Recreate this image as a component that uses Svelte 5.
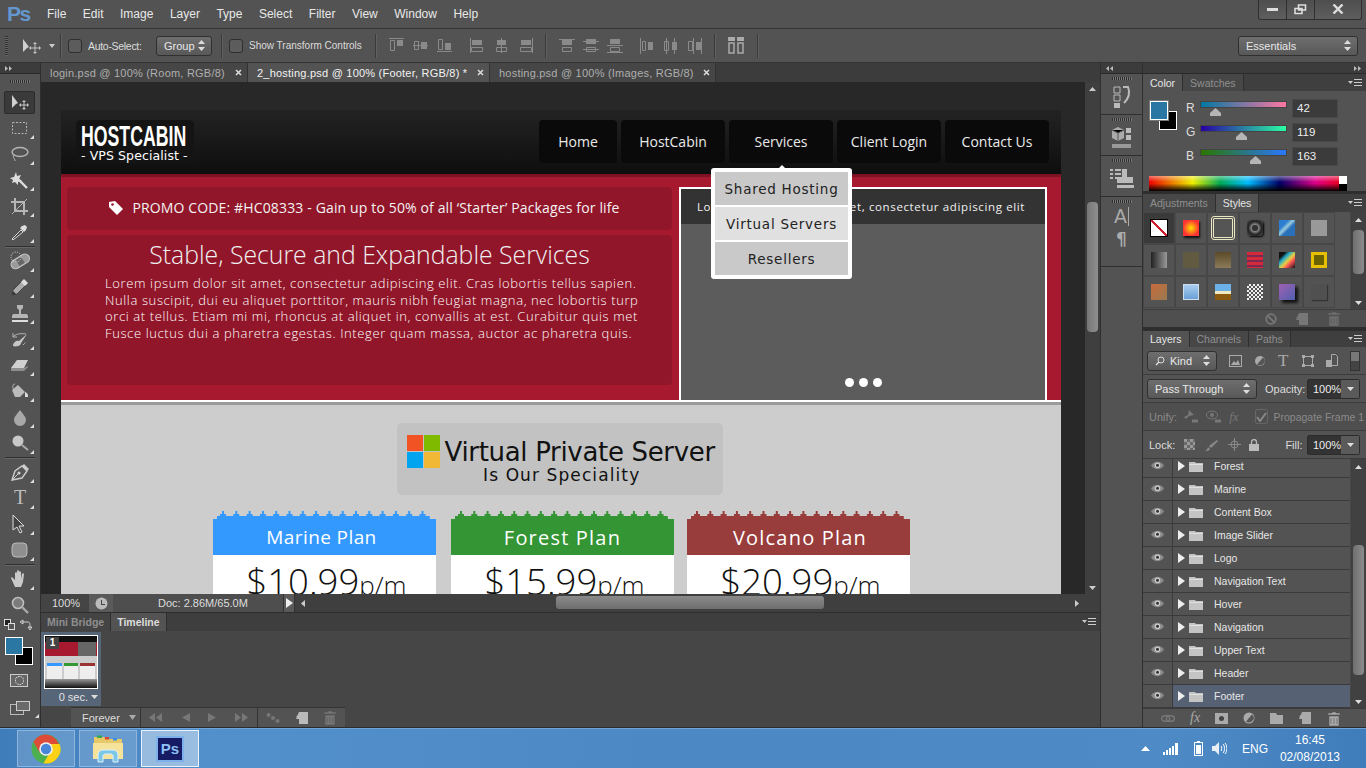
<script>
  const menus = ['File', 'Edit', 'Image', 'Layer', 'Type', 'Select', 'Filter', 'View', 'Window', 'Help'];
  const docTabs = [
    { name: 'login.psd @ 100% (Room, RGB/8)', w: 207 },
    { name: '2_hosting.psd @ 100% (Footer, RGB/8) *', w: 242, on: true },
    { name: 'hosting.psd @ 100% (Images, RGB/8)', w: 226 }
  ];
  const s = 'fill="none" stroke="#b5b5b5"';
  const f = 'fill="#b5b5b5"';

  const toolGroups = [
    [
      { p: `<path d="M3 2v13l4-4 2-1z" fill="#d0d0d0"/><path d="M15 8v8M11 12h8" stroke="#c4c4c4"/><path d="M15 7l-2 2h4zM15 17l-2-2h4zM10 12l2-2v4zM20 12l-2-2v4z" fill="#c4c4c4"/>`, on: true, nc: true },
      { p: `<rect x="3.5" y="4.5" width="14" height="11" ${s} stroke-dasharray="2 1.5"/>` },
      { p: `<ellipse cx="11" cy="8" rx="8" ry="4.5" ${s} stroke-width="1.4"/><path d="M5 11c-2 3 1 3 1 6" ${s}/>` },
      { p: `<path d="M9 9l9 9" stroke="#ddd" stroke-width="2.4"/><path d="M7 2l1 4 4-1-2 4 3 2-4 1 0 3-3-3-3 1 1-3-3-2 4-1z" fill="#ddd"/>` },
      { p: `<path d="M6 2v13h13M2 6h13v13" ${s} stroke-width="2"/><path d="M3 18L18 3" stroke="#b5b5b5"/>` },
      { p: `<path d="M4 18l-1-1 9-9 2 2z" fill="#444" stroke="#ddd"/><path d="M11 6l4 4 2-2 1-3-2-2-3 1z" fill="#ddd"/>` }
    ],
    [
      { p: `<g transform="rotate(-32 11 10)"><rect x="1" y="6" width="20" height="9" rx="4.5" fill="#9a9a9a" stroke="#ccc"/><rect x="8" y="7" width="6" height="7" fill="#666"/></g><circle cx="7" cy="6" r="5" fill="none" stroke="#ddd" stroke-dasharray="1 1.4"/>` },
      { p: `<path d="M3 18l1-5L13 4l4 4-9 9z" fill="#aaa" stroke="#444"/><path d="M12 5l3-3 4 4-3 3z" fill="#ddd"/><path d="M3 18l1-4 3 3z" fill="#333"/>` },
      { p: `<path d="M8 2h6v3l-2 2v4h6l1 2v2H3v-2l1-2h6V7L8 5z" ${f}/><path d="M3 18h16" stroke="#ddd" stroke-width="2"/>` },
      { p: `<path d="M4 17c0-4 4-6 6-5l8-7-6 9c0 3-5 4-8 3z" fill="#c6c6c6"/><path d="M4 8c2-3 8-4 13-3" ${s}/><path d="M4 8V4M4 8h4" ${s}/><path d="M14 16l3-3" stroke="#ddd" stroke-dasharray="1 1"/>` },
      { p: `<path d="M2 13L8 5h11l-4 8z" fill="#d0d0d0"/><path d="M2 13v3h13l4-4v-1l-4 2z" fill="#8e8e8e"/>` },
      { p: `<path d="M3 9l6-5 7 7-5 5H6z" fill="#bbb"/><path d="M6 3c-3 0-3 5 0 6" ${s}/><path d="M16 11c3 1 3 3 3 5h-3z" fill="#ddd"/>` },
      { p: `<path d="M11 3c3 4 6 7 6 10a6 6 0 01-12 0c0-3 3-6 6-10z" fill="#a8a8a8"/>` },
      { p: `<circle cx="9" cy="8" r="5.5" fill="#c8c8c8"/><path d="M13 12l6 5" stroke="#aaa" stroke-width="2"/>` }
    ],
    [
      { p: `<path d="M3 18l3-9 7-5 5 5-5 7z" fill="#555" stroke="#ccc" stroke-width="1.4"/><path d="M3 18l6-6" stroke="#ccc"/><circle cx="10" cy="11" r="1.6" fill="#ccc"/><path d="M13 4l2-2 5 5-2 2z" fill="#ccc"/>` },
      { p: `<text x="11" y="16" text-anchor="middle" font-family="Liberation Serif" font-size="20" fill="#bdbdbd">T</text>` },
      { p: `<path d="M4 1v15l4-3 3 6 2-1-3-6h5z" fill="#444" stroke="#ddd"/>` },
      { p: `<rect x="3" y="3" width="15" height="14" rx="4" fill="#8f8f8f" stroke="#bbb"/>` }
    ],
    [
      { p: `<path d="M6 18L2 9l1-1 3 3V4l1-1 1 1v5V2l1-1 1 1v7V3l1-1 1 1v7l1-5 1-1 1 1-1 8-2 5z" fill="#c9c9c9"/>` },
      { p: `<circle cx="9" cy="8" r="5.5" fill="#7c7c7c" stroke="#bdbdbd" stroke-width="1.6"/><path d="M13 12l6 6" stroke="#aaa" stroke-width="2.4"/>`, nc: true }
    ]
  ];

  const dockIcons = [
    { h: 41, p: `<path d="M6 3h6v6H6zM6 11h6v6H6z" fill="none" stroke="#bbb"/><rect x="6" y="19" width="6" height="5" fill="#bbb"/><path d="M15 3h5c2 5 1 11-4 16" fill="none" stroke="#bbb" stroke-width="2"/>` },
    { h: 41, p: `<path d="M4 5l6-3 6 3v8l-6 3-6-3z" fill="#aaa"/><path d="M4 5l6 3 6-3M10 8v8" stroke="#555"/><rect x="18" y="3" width="5" height="5" fill="#bbb"/><rect x="18" y="10" width="5" height="5" fill="#bbb"/><rect x="4" y="19" width="19" height="4" fill="#999"/>` },
    { h: 41, p: `<path d="M2 4h3M7 4h6M2 8h3M7 8h6M2 12h3M7 12h6" stroke="#bbb" stroke-width="2" fill="none"/><path d="M14 3h5v8h6v6H9v-6h5z" fill="#bbb"/><rect x="9" y="19" width="17" height="3" fill="#bbb"/>` }
  ];

  const aligns = [
    'M0 .5H15M1.5 2.5h4v10h-4z', 'M0 7.5h15M1.5 3.5h4v8h-4z', 'M0 13.5h15M1.5 1.5h4v10h-4z',
    'M.5 0v15M1.5 9.5h11v4h-11z', 'M7.5 0v15M2.5 9.5h10v4h-10z', 'M14.5 0v15M2.5 9.5h11v4h-11z'
  ];
  const alignFills = ['M8 2h6v6H8z', 'M8 4h6v7H8z', 'M8 5h6v7H8z', 'M2 2h10v5H2z', 'M3 2h9v5H3z', 'M3 2h10v5H3z'];
  const dists = [
    ['M0 1.5h16M3.5 9.5h9v4h-9z', 'M3 2h10v5H3z'], ['M0 3.5h16M0 11.5h16M3.5 9.5h9v4h-9z', 'M3 1h10v5H3z'], ['M0 7.5h16M0 14.5h16M3.5 9.5h9v4h-9z', 'M3 1h10v5H3z'],
    ['M1.5 0v16M3.5 3.5h3v9h-3z', 'M9 4h5v8H9z'], ['M3.5 0v16M11.5 0v16M1.5 3.5h4v9h-4z', 'M9 4h5v8H9z'], ['M6.5 0v16M14.5 0v16M1.5 3.5h4v9h-4z', 'M9 4h5v8H9z']
  ];

  const channels = [
    { l: 'R', v: 42, g: 'rgb(0,119,163),rgb(255,119,163)' },
    { l: 'G', v: 119, g: 'rgb(42,0,163),rgb(42,255,163)' },
    { l: 'B', v: 163, g: 'rgb(42,119,0),rgb(42,119,255)' }
  ];
  const styleTiles = Array.from({ length: 18 }, (_, i) => i);
  const layers = ['Forest', 'Marine', 'Content Box', 'Image Slider', 'Logo', 'Navigation Text', 'Hover', 'Navigation', 'Upper Text', 'Header', 'Footer'];

  const nav = ['Home', 'HostCabin', 'Services', 'Client Login', 'Contact Us'];
  const navWidths = [78, 104, 104, 104, 104];
  const dropdown = ['Shared Hosting', 'Virtual Servers', 'Resellers'];
  const plans = [
    { name: 'Marine Plan', price: '$10.99', cls: 'marine' },
    { name: 'Forest Plan', price: '$15.99', cls: 'forest' },
    { name: 'Volcano Plan', price: '$20.99', cls: 'volcano' }
  ];
  // stepped teeth along the top of a plan header
  function teeth() {
    let d = 'M4 8V5';
    for (let i = 0; i < 16; i++) {
      const x = 4 + i * 13.3;
      d += `H${x + 3}V3H${x + 5}V0H${x + 7}V3H${x + 9}V5`;
      d += `H${x + 13.3}`;
    }
    return d + 'V8z';
  }
  const toothPath = teeth();
</script>

{#snippet grip(w)}
  <span class="grip" style="width:{w}px"></span>
{/snippet}

{#snippet tri()}
  <svg class="tri" width="4" height="4" viewBox="0 0 4 4"><path d="M4 0v4H0z" fill="#ddd"/></svg>
{/snippet}

{#snippet updown()}
  <svg class="updown" width="7" height="11" viewBox="0 0 7 11"><path d="M3.5 0L7 4H0zM3.5 11L0 7h7z" fill="#ddd"/></svg>
{/snippet}

{#snippet trash(c)}
  <svg width="14" height="15" viewBox="0 0 14 15"><path d="M5 1h4v1h4v2H1V2h4zM2 5h10v10H2zM4 7v6M7 7v6M10 7v6" fill="{c}" stroke="#535353" stroke-width=".6"/></svg>
{/snippet}

{#snippet newlayer(c)}
  <svg width="14" height="14" viewBox="0 0 14 14"><path d="M4 1h9v12H4V8H1z" fill="{c}"/><path d="M1 6l3-3v3z" fill="{c}"/></svg>
{/snippet}

<div class="ps">
  <!-- menu bar -->
  <header class="menubar">
    <span class="pslogo">Ps</span>
    <nav class="menus">
      {#each menus as m}<span>{m}</span>{/each}
    </nav>
    <div class="winbtns">
      <span class="wb wmin"><svg width="11" height="4"><rect width="11" height="3" y="1" fill="#ddd"/></svg></span>
      <span class="wb wres"><svg width="13" height="11" viewBox="0 0 13 11"><path d="M4.500 1h7v5h-7zM1 4.500h7v5H1z" fill="#535353" stroke="#ddd" stroke-width="1.6"/></svg></span>
      <span class="wb wclose"><svg width="12" height="10" viewBox="0 0 12 10"><path d="M1.500 .5l9 9M10.500 .5l-9 9" stroke="#ddd" stroke-width="2.400"/></svg></span>
    </div>
  </header>

  <!-- options bar -->
  <div class="options">
    <span class="vgrip"></span>
    <svg class="opt-move" width="20" height="16" viewBox="0 0 20 16"><path d="M0 1v13l4-4 2-1z" fill="#d0d0d0"/><path d="M12 5v10M7 10h10" stroke="#c4c4c4"/><path d="M12 4l-2 2h4zM12 16l-2-2h4zM6 10l2-2v4zM18 10l-2-2v4z" fill="#c4c4c4"/></svg>
    <svg class="caret" width="6" height="4"><path d="M0 0h6L3 4z" fill="#ccc"/></svg>
    <span class="vsep m1"></span>
    <span class="check"></span>
    <span class="optlabel auto">Auto-Select:</span>
    <span class="select grp">Group {@render updown()}</span>
    <span class="vsep m2"></span>
    <span class="check"></span>
    <span class="optlabel show">Show Transform Controls</span>
    <span class="vsep m3"></span>
    <div class="alignset">
      {#each aligns as a, i}
        <svg class:gapl={i === 3} width="15" height="15" viewBox="0 0 15 15"><path d={a} fill="none" stroke="#8a8a8a"/><path d={alignFills[i]} fill="#8a8a8a"/></svg>
      {/each}
    </div>
    <span class="vsep m4"></span>
    <div class="alignset dist">
      {#each dists as a, i}
        <svg class:gapl={i === 3} width="16" height="16" viewBox="0 0 16 16"><path d={a[0]} fill="none" stroke="#8a8a8a"/><path d={a[1]} fill="#8a8a8a"/></svg>
      {/each}
    </div>
    <span class="vsep m5"></span>
    <svg class="arrange" width="16" height="17" viewBox="0 0 16 17"><path d="M0 0h7v4H0zM9 0h7v4H9z" fill="#aaa"/><path d="M1 6h5v10H1zM10 6h5v10h-5z" fill="none" stroke="#aaa" stroke-width="1.500"/></svg>
    <span class="vsep m6"></span>
    <span class="select essentials">Essentials {@render updown()}</span>
  </div>

  <div class="work">
    <!-- tools -->
    <aside class="tools">
      <div class="strip"><svg width="8" height="5"><path d="M0 0l3 2.500L0 5zM4 0l3 2.500L4 5z" fill="#bbb"/></svg></div>
      <div class="toolgrip">{@render grip(20)}</div>
      {#each toolGroups as g, gi}
        {#if gi > 0}<div class="toolsep"></div>{/if}
        {#each g as t}
          <div class="tool" class:on={t.on}>
            <svg width="22" height="20" viewBox="0 0 22 20">{@html t.p}</svg>
            {#if !t.nc}{@render tri()}{/if}
          </div>
        {/each}
      {/each}
      <div class="colors">
        <svg class="defaults" width="28" height="13" viewBox="0 0 28 13"><rect x=".5" y=".5" width="6" height="6" fill="#222" stroke="#ddd"/><rect x="4.500" y="4.500" width="6" height="6" fill="#555" stroke="#ddd"/><path d="M18 3h6c2 0 2 2 2 6M16 3l3-2v4zM26 11l-2-3h4z" fill="none" stroke="#ccc"/></svg>
        <span class="sw bg"></span>
        <span class="sw fg"></span>
      </div>
      <div class="qmask"><span></span></div>
      <div class="screenmode">
        <svg width="22" height="14" viewBox="0 0 22 14"><rect x=".5" y="3.500" width="13" height="10" fill="none" stroke="#bbb"/><rect x="6.500" y=".5" width="13" height="9" fill="#6a6a6a" stroke="#ccc"/></svg>
        {@render tri()}
      </div>
    </aside>

    <!-- centre column -->
    <main class="center">
      <div class="doctabs">
        {#each docTabs as t}
          <div class="doctab" class:on={t.on} style="width:{t.w}px">
            <span>{t.name}</span>
            <svg width="7" height="7" viewBox="0 0 7 7"><path d="M1 1l5 5M6 1L1 6" stroke="#ddd" stroke-width="1.500"/></svg>
          </div>
        {/each}
      </div>

      <div class="canvas">
        <div class="docwrap">
          <article class="page">
            <div class="site-head">
              <div class="logo">
                <div class="logo-main">HOSTCABIN</div>
                <div class="logo-sub">- VPS Specialist -</div>
              </div>
              <ul class="site-nav">
                {#each nav as n, i}
                  <li style="width:{navWidths[i]}px">
                    {n}
                    {#if n === 'Services'}
                      <div class="drop">
                        {#each dropdown as d, di}
                          <div class="drop-item" class:hover={di === 1}>{d}</div>
                        {/each}
                      </div>
                    {/if}
                  </li>
                {/each}
              </ul>
            </div>
            <div class="hero">
              <div class="hero-left">
                <div class="promo">
                  <svg width="16" height="16" viewBox="0 0 16 16"><path d="M1 2l6-1 8 8-6 6-8-8z" fill="#fff"/><circle cx="4.500" cy="4.500" r="1.300" fill="#92162a"/></svg>
                  <span>PROMO CODE: #HC08333 - Gain up to 50% of all ‘Starter’ Packages for life</span>
                </div>
                <div class="intro">
                  <h1>Stable, Secure and Expandable Services</h1>
                  <p>Lorem ipsum dolor sit amet, consectetur adipiscing elit. Cras lobortis tellus sapien.<br>Nulla suscipit, dui eu aliquet porttitor, mauris nibh feugiat magna, nec lobortis turp<br>orci at tellus. Etiam mi mi, rhoncus at aliquet in, convallis at est. Curabitur quis met<br>Fusce luctus dui a pharetra egestas. Integer quam massa, auctor ac pharetra quis.</p>
                </div>
              </div>
              <div class="slider">
                <div class="slide-cap">Lorem ipsum dolor sit amet, consectetur adipiscing elit</div>
                <div class="slide-body">
                  <div class="dots"><i></i><i></i><i></i></div>
                </div>
              </div>
            </div>
            <div class="rule"></div>
            <section class="plans">
              <div class="vps">
                <svg width="33" height="33" viewBox="0 0 33 33"><rect width="16" height="16" fill="#f25325"/><rect x="17" width="16" height="16" fill="#7fba00"/><rect y="17" width="16" height="16" fill="#00a4ef"/><rect x="17" y="17" width="16" height="16" fill="#f1b835"/></svg>
                <div class="vps-text">
                  <div class="vps-title">Virtual Private Server</div>
                  <div class="vps-sub">Is Our Speciality</div>
                </div>
              </div>
              <div class="plan-row">
                {#each plans as p}
                  <div class="plan {p.cls}">
                    <svg class="teeth" width="223" height="8" viewBox="0 0 223 8"><path d={toothPath}/></svg>
                    <div class="plan-name">{p.name}</div>
                    <div class="plan-price">{p.price}<small>p/m</small></div>
                  </div>
                {/each}
              </div>
            </section>
          </article>
        </div>
        <div class="vscroll">
          <svg width="7" height="4"><path d="M3.500 0L7 4H0z" fill="#ccc"/></svg>
          <span class="vthumb"></span>
          <svg width="7" height="4"><path d="M3.500 4L7 0H0z" fill="#ccc"/></svg>
        </div>
      </div>

      <div class="status">
        <span class="zoomval">100%</span>
        <span class="stat-icon"><svg width="13" height="13" viewBox="0 0 13 13"><circle cx="6.500" cy="6.500" r="6" fill="#bbb"/><path d="M6 3h1v4h3v1H6z" fill="#444"/></svg></span>
        <span class="docsize">Doc: 2.86M/65.0M</span>
        <span class="stat-arrow"><svg width="7" height="10"><path d="M0 0l7 5-7 5z" fill="#eee"/></svg></span>
        <div class="hscroll">
          <svg width="4" height="7"><path d="M0 3.500L4 0v7z" fill="#ccc"/></svg>
          <span class="hthumb"></span>
          <svg width="4" height="7"><path d="M4 3.500L0 0v7z" fill="#ccc"/></svg>
        </div>
      </div>

      <div class="bottom">
        <div class="btabs">
          <span class="btab">Mini Bridge</span>
          <span class="btab on">Timeline</span>
          <svg class="menuic" width="14" height="8" viewBox="0 0 14 8"><path d="M0 2h5L2.500 5z" fill="#ccc"/><path d="M6 .5h8M6 3.500h8M6 6.500h8" stroke="#ccc"/></svg>
        </div>
        <div class="frames">
          <div class="frame">
            <div class="thumb">
              <span class="fnum">1</span>
              <div class="t-head"></div>
              <div class="t-hero"><i></i></div>
              <div class="t-body"><b></b><b class="g"></b><b class="r"></b></div>
              <div class="t-foot"></div>
            </div>
            <div class="ftime">0 sec. <svg width="7" height="4"><path d="M0 0h7L3.500 4z" fill="#ddd"/></svg></div>
          </div>
        </div>
        <div class="tlbar">
          <span class="forever">Forever <svg width="7" height="5"><path d="M0 0h7L3.500 5z" fill="#aaa"/></svg></span>
          <div class="tlbtns">
            <svg width="14" height="9"><path d="M6 0v9L0 4.500zM13 0v9L7 4.500z" fill="#777"/></svg>
            <svg width="8" height="9"><path d="M8 0v9L0 4.500z" fill="#777"/></svg>
            <svg width="8" height="9"><path d="M0 0v9l8-4.500z" fill="#777"/></svg>
            <svg width="14" height="9"><path d="M0 0v9l6-4.500zM7 0v9l6-4.500z" fill="#777"/></svg>
          </div>
          <div class="tlbtns two">
            <svg width="14" height="10"><circle cx="2.500" cy="2" r="2" fill="#777"/><circle cx="7" cy="5" r="2" fill="#777"/><circle cx="11.500" cy="8" r="2" fill="#777"/></svg>
            {@render newlayer('#bbb')}
            {@render trash('#777')}
          </div>
        </div>
      </div>
    </main>

    <!-- dock -->
    <aside class="dock">
      <div class="strip"><svg width="8" height="5"><path d="M3 0L0 2.500 3 5zM7 0L4 2.500 7 5z" fill="#bbb"/></svg></div>
      {#each dockIcons as d}
        <div class="dockcell">
          {@render grip(20)}
          <svg width="27" height="25" viewBox="0 0 27 25">{@html d.p}</svg>
        </div>
      {/each}
      <div class="dockcell tall">
        {@render grip(20)}
        <span class="dock-a">A<i></i></span>
        <span class="dock-p">¶</span>
      </div>
    </aside>

    <!-- panels -->
    <aside class="panels">
      <div class="strip right"><svg width="8" height="5"><path d="M0 0l3 2.500L0 5zM4 0l3 2.500L4 5z" fill="#bbb"/></svg></div>

      <section class="pgroup">
        <div class="ptabs">
          <span class="ptab on">Color</span><span class="ptab">Swatches</span>
          <svg class="menuic" width="14" height="8" viewBox="0 0 14 8"><path d="M0 2h5L2.500 5z" fill="#ccc"/><path d="M6 .5h8M6 3.500h8M6 6.500h8" stroke="#ccc"/></svg>
        </div>
        <div class="colorbody">
          <div class="colortop">
            <div class="pair"><span class="sw bg"></span><span class="sw fg"></span></div>
            <div class="chans">
              {#each channels as c}
                <div class="chan">
                  <span class="chlabel">{c.l}</span>
                  <div class="chbar" style="background:linear-gradient(90deg,{c.g})">
                    <svg class="chthumb" style="left:{c.v / 255 * 85}px" width="11" height="8" viewBox="0 0 11 8"><path d="M5.500 0L11 5v3H0V5z" fill="#b5b5b5"/></svg>
                  </div>
                  <span class="chval">{c.v}</span>
                </div>
              {/each}
            </div>
          </div>
          <div class="spectrum"><span class="spw"></span><span class="spb"></span></div>
        </div>
      </section>

      <section class="pgroup styles">
        <div class="ptabs">
          <span class="ptab">Adjustments</span><span class="ptab on">Styles</span>
          <svg class="menuic" width="14" height="8" viewBox="0 0 14 8"><path d="M0 2h5L2.500 5z" fill="#ccc"/><path d="M6 .5h8M6 3.500h8M6 6.500h8" stroke="#ccc"/></svg>
        </div>
        <div class="stylesbody">
          <div class="stylegrid">
            {#each styleTiles as t}
              <div class="tile" class:first={t === 0}><i class="st s{t}"></i></div>
            {/each}
          </div>
          <div class="pscroll">
            <svg width="7" height="4"><path d="M3.500 0L7 4H0z" fill="#ddd"/></svg>
            <span class="pthumb st-thumb"></span>
            <svg width="7" height="4"><path d="M3.500 4L7 0H0z" fill="#ddd"/></svg>
          </div>
        </div>
        <div class="pfoot stylesfoot">
          <svg width="12" height="12" viewBox="0 0 12 12"><circle cx="6" cy="6" r="4.800" fill="none" stroke="#777" stroke-width="1.800"/><path d="M2.500 2.500l7 7" stroke="#777" stroke-width="1.800"/></svg>
          {@render newlayer('#777')}
          {@render trash('#6e6e6e')}
        </div>
      </section>

      <section class="pgroup layers">
        <div class="ptabs lt">
          <span class="ptab on">Layers</span><span class="ptab">Channels</span><span class="ptab">Paths</span>
          <svg class="menuic" width="14" height="8" viewBox="0 0 14 8"><path d="M0 2h5L2.500 5z" fill="#ccc"/><path d="M6 .5h8M6 3.500h8M6 6.500h8" stroke="#ccc"/></svg>
        </div>
        <div class="lrow filter">
          <span class="select kind">
            <svg width="10" height="10" viewBox="0 0 10 10"><circle cx="6" cy="4" r="3" fill="none" stroke="#ddd"/><path d="M4 6l-3 3" stroke="#ddd" stroke-width="1.500"/></svg>
            <span class="kindtxt">Kind</span>{@render updown()}
          </span>
          <div class="filters">
            <svg width="13" height="12" viewBox="0 0 13 12"><rect x=".5" y=".5" width="12" height="11" fill="none" stroke="#aaa"/><path d="M2 10l3-4 2 2 2-3 2 5z" fill="#aaa"/></svg>
            <svg width="12" height="12" viewBox="0 0 12 12"><circle cx="6" cy="6" r="5" fill="#aaa"/><path d="M3 9.500L9 2.500A5 5 0 0111 6a5 5 0 01-8 3.500z" fill="#555"/></svg>
            <span class="ft">T</span>
            <svg width="12" height="12" viewBox="0 0 12 12"><path d="M2 1.500h8M2 10.500h8M1.500 2v8M10.500 2v8" stroke="#aaa"/><path d="M0 0h3v3H0zM9 0h3v3H9zM0 9h3v3H0zM9 9h3v3H9z" fill="#aaa"/></svg>
            <svg width="12" height="13" viewBox="0 0 12 13"><path d="M5.500 .5h4l2 2v9h-6z" fill="none" stroke="#aaa"/><path d="M0 6h6v7H0z" fill="#aaa"/></svg>
            <span class="toggle"></span>
          </div>
        </div>
        <div class="lrow blend">
          <span class="select pass">Pass Through {@render updown()}</span>
          <span class="rowlabel">Opacity:</span>
          <span class="pct">100%<b><svg width="7" height="4"><path d="M0 0h7L3.500 4z" fill="#ddd"/></svg></b></span>
        </div>
        <div class="lrow unify">
          <span class="dim">Unify:</span>
          <svg width="17" height="15" viewBox="0 0 17 15"><path d="M1 8l4-2 1-5 5 5-5 1-3 3z" fill="#777"/><path d="M9 12h6" stroke="#777" stroke-width="3"/></svg>
          <svg width="17" height="15" viewBox="0 0 17 15"><ellipse cx="6" cy="6" rx="5.500" ry="4" fill="none" stroke="#777"/><circle cx="6" cy="6" r="2" fill="#777"/><path d="M9 12h6" stroke="#777" stroke-width="3"/></svg>
          <span class="fxdim">fx</span>
          <span class="pcheck"><svg width="11" height="10" viewBox="0 0 11 10"><path d="M1 5l3 4 6-8" fill="none" stroke="#888" stroke-width="2"/></svg></span>
          <span class="dim prop">Propagate Frame 1</span>
        </div>
        <div class="lrow lock">
          <span class="rowlabel">Lock:</span>
          <svg class="checker" width="11" height="11" viewBox="0 0 11 11"><path d="M0 0h11v11H0z" fill="#6a6a6a"/><path d="M0 0h3v3H0zM6 0h3v3H6zM3 3h3v3H3zM9 3h2v3H9zM0 6h3v3H0zM6 6h3v3H6zM3 9h3v2H3zM9 9h2v2H9z" fill="#999"/></svg>
          <svg width="16" height="12" viewBox="0 0 16 12"><path d="M0 12c4 0 4-2 5-4l2 2c-1 2-3 2-7 2zM6 7l8-6 1 1-7 7z" fill="#8a8a8a"/></svg>
          <svg width="13" height="13" viewBox="0 0 13 13"><circle cx="6.500" cy="6.500" r="3.500" fill="none" stroke="#8a8a8a"/><path d="M6.500 0v13M0 6.500h13" stroke="#8a8a8a"/></svg>
          <svg width="10" height="12" viewBox="0 0 10 12"><path d="M2.500 5V3a2.500 2.500 0 015 0v2" fill="none" stroke="#bbb" stroke-width="1.300"/><rect y="5" width="10" height="7" fill="#bbb"/></svg>
          <span class="rowlabel fill">Fill:</span>
          <span class="pct">100%<b><svg width="7" height="4"><path d="M0 0h7L3.500 4z" fill="#ddd"/></svg></b></span>
        </div>
        <div class="lists">
          <div class="rows">
            {#each layers as l, i}
              <div class="row" class:sel={i === layers.length - 1}>
                <span class="eye"><svg width="13" height="9" viewBox="0 0 13 9"><path d="M0 4.500C3-.5 10-.5 13 4.500 10 9.500 3 9.500 0 4.500z" fill="#888"/><circle cx="6.500" cy="4.200" r="2.800" fill="#ccc"/><circle cx="6.500" cy="4.200" r="1.500" fill="#333"/></svg></span>
                <span class="lbody">
                  <svg width="7" height="10"><path d="M0 0l7 5-7 5z" fill="#eee"/></svg>
                  <svg class="folder" width="14" height="11" viewBox="0 0 14 11"><path d="M0 1h6l1 1h7v9H0z" fill="#c4c4c4"/><path d="M0 3h14v1H0z" fill="#e0e0e0"/></svg>
                  <span class="lname">{l}</span>
                </span>
              </div>
            {/each}
          </div>
          <div class="pscroll wide">
            <svg width="7" height="4"><path d="M3.500 0L7 4H0z" fill="#ddd"/></svg>
            <span class="pthumb lay-thumb"></span>
            <svg width="7" height="4"><path d="M3.500 4L7 0H0z" fill="#ddd"/></svg>
          </div>
        </div>
        <div class="pfoot layersfoot">
          <svg width="14" height="7" viewBox="0 0 14 7"><rect x=".7" y=".7" width="8" height="5.600" rx="2.800" fill="none" stroke="#777" stroke-width="1.400"/><rect x="5.300" y=".7" width="8" height="5.600" rx="2.800" fill="none" stroke="#777" stroke-width="1.400"/></svg>
          <span class="ffx">fx</span>
          <svg width="13" height="11" viewBox="0 0 13 11"><rect width="13" height="11" fill="#aaa"/><circle cx="6.500" cy="5.500" r="2.500" fill="#444"/></svg>
          <svg width="12" height="12" viewBox="0 0 12 12"><circle cx="6" cy="6" r="5.500" fill="#aaa"/><path d="M3 9.500L9 2.500A5 5 0 0111 6a5 5 0 01-8 3.500z" fill="#555"/></svg>
          <svg width="13" height="11" viewBox="0 0 13 11"><path d="M0 0h6l1 2h6v9H0z" fill="#aaa"/></svg>
          {@render newlayer('#aaa')}
          {@render trash('#aaa')}
        </div>
      </section>
    </aside>
  </div>

  <!-- taskbar -->
  <footer class="taskbar">
    <div class="taskbtn">
      <svg width="30" height="30" viewBox="0 0 30 30">
        <circle cx="15" cy="15" r="14.500" fill="#4caf50"/>
        <path d="M15 .5A14.500 14.500 0 002.500 8l6.500 11 6-4h13.500A14.500 14.500 0 0015 .5z" fill="#dd4b39" />
        <path d="M28.600 10H15a5 5 0 014.500 7.500L12.500 29.300A14.500 14.500 0 0028.600 10z" fill="#fcd116"/>
        <circle cx="15" cy="15" r="6.800" fill="#f1f1f1"/>
        <circle cx="15" cy="15" r="5.200" fill="#4a86d8"/>
      </svg>
    </div>
    <div class="taskbtn">
      <svg width="32" height="30" viewBox="0 0 32 30">
        <path d="M2 3h10l2 2h16v20H2z" fill="#e8c96a"/>
        <rect x="5" y="1.500" width="5" height="2.500" fill="#35a853"/><rect x="13" y="3" width="4" height="2.500" fill="#d9442b"/><rect x="21" y="4" width="4" height="2.500" fill="#3b8fe0"/>
        <path d="M1 9h30v16H1z" fill="#f6e39b"/>
        <path d="M6 28v-7c0-3 2-5 5-5h10c3 0 5 2 5 5v7h-5v-6c0-1-1-2-2-2h-6c-1 0-2 1-2 2v6z" fill="#7cc6e8" stroke="#d9f2fb"/>
      </svg>
    </div>
    <div class="taskbtn active">
      <span class="psicon">Ps</span>
    </div>
    <div class="tray">
      <svg width="9" height="5"><path d="M4.500 0L9 5H0z" fill="#fff"/></svg>
      <svg class="sig" width="16" height="12" viewBox="0 0 16 12"><path d="M0 9h2v3H0zM3 7h2v5H3zM6 5h2v7H6zM9 3h2v9H9zM12 0h3v12h-3z" fill="#fff"/></svg>
      <svg class="bat" width="9" height="15" viewBox="0 0 9 15"><path d="M3 0h3v1.500H3z" fill="#fff"/><rect x=".5" y="1.500" width="8" height="13" fill="none" stroke="#fff"/><rect x="2" y="4" width="5" height="9" fill="#fff"/></svg>
      <svg class="spk" width="15" height="13" viewBox="0 0 15 13"><path d="M0 4h3l4-4v13L3 9H0z" fill="#e8eef5"/><path d="M9 4c1 1 1 4 0 5M11 2c2 2 2 7 0 9M13 1c2.500 3 2.500 8 0 11" fill="none" stroke="#fff"/></svg>
      <span class="eng">ENG</span>
      <div class="clock"><span>16:45</span><span>02/08/2013</span></div>
    </div>
  </footer>
</div>

<style>
  :global(body) { margin: 0; background: #535353; }
  .ps {
    width: 1366px; height: 768px; overflow: hidden;
    display: grid; grid-template-rows: 29px 34px 665px 40px;
    font-family: "Liberation Sans", Arial, sans-serif; font-size: 11px; color: #e4e4e4;
    background: #535353;
  }
  svg { display: block; flex: none; }

  .menubar { display: flex; align-items: center; background: #535353; border-bottom: 1px solid #333; box-sizing: border-box; }
  .pslogo { width: 47px; padding-left: 7px; box-sizing: border-box; font: bold 21px "Liberation Sans", sans-serif; color: #6496cf; letter-spacing: -1.5px; }
  .menus { display: flex; gap: 16.5px; font-size: 12px; color: #e8e8e8; }
  .winbtns { margin-left: auto; margin-right: 4px; margin-top: -9px; display: flex; height: 19px; border: 1px solid #2f2f2f; border-top: 0; border-radius: 0 0 3px 3px; background: linear-gradient(#4e4e4e, #5e5e5e); }
  .wb { display: flex; align-items: center; justify-content: center; border-right: 1px solid #2f2f2f; }
  .wmin, .wres { width: 27px; }
  .wclose { width: 46px; border: 0; }

  .options { display: flex; align-items: center; border-bottom: 1px solid #333; box-sizing: border-box; background: #535353; position: relative; }
  .vgrip { width: 3px; height: 20px; margin-left: 5px; background: repeating-linear-gradient(#2f2f2f 0 1px, #666 1px 2px); }
  .opt-move { margin-left: 15px; }
  .caret { margin-left: 6px; }
  .vsep { width: 1px; height: 24px; background: #3a3a3a; box-shadow: 1px 0 #616161; flex: none; }
  .m1 { margin: 0 7px 0 5px; }
  .check { width: 12px; height: 12px; border: 1px solid #2f2f2f; border-radius: 3px; background: #5c5c5c; flex: none; }
  .optlabel { margin-left: 6px; color: #dcdcdc; font-size: 10.5px; white-space: nowrap; }
  .auto { width: 68px; letter-spacing: -.3px; }
  .select { display: inline-flex; align-items: center; justify-content: space-between; box-sizing: border-box; height: 20px; padding: 0 6px 0 7px; background: linear-gradient(#6e6e6e, #585858); border: 1px solid #303030; border-radius: 3px; color: #e8e8e8; flex: none; }
  .grp { width: 56px; }
  .m2 { margin: 0 7px 0 9px; }
  .show { width: 113px; font-size: 10px; }
  .m3 { margin: 0 13px; }
  .alignset { display: flex; gap: 9px; flex: none; }
  .alignset .gapl { margin-left: 9px; }
  .alignset.dist { gap: 8px; }
  .alignset.dist .gapl { margin-left: 8px; }
  .m4 { margin: 0 13px 0 12px; }
  .m5 { margin: 0 13px 0 11px; }
  .m6 { margin: 0 0 0 13px; }
  .essentials { margin-left: auto; margin-right: 8px; width: 120px; }

  .work { display: flex; min-height: 0; background: #282828; border-bottom: 1px solid #2c2c2c; box-sizing: border-box; }
  .strip { height: 11px; background: #3c3c3c; border-bottom: 1px solid #2a2a2a; box-sizing: border-box; display: flex; align-items: center; padding: 0 5px; }
  .strip.right { justify-content: flex-end; padding-right: 4px; }

  .tools { width: 40px; flex: none; background: #535353; border-right: 1px solid #2f2f2f; box-sizing: content-box; }
  .toolgrip { height: 15px; display: flex; align-items: center; justify-content: center; }
  .grip { display: block; height: 3px; background: repeating-linear-gradient(90deg, #2e2e2e 0 1px, #777 1px 2px); }
  .tool { position: relative; height: 26px; width: 31px; margin-left: 4px; display: flex; align-items: center; justify-content: center; box-sizing: border-box; }
  .tool.on { background: #3a3a3a; border: 1px solid #2c2c2c; border-radius: 2px; height: 23px; margin-top: 2px; margin-bottom: 1px; }
  .tri { position: absolute; right: 1px; bottom: 2px; }
  .toolsep { height: 1px; margin: 1px 5px; background: #303030; box-shadow: 0 1px #666; }
  .colors { position: relative; height: 55px; margin-top: 1px; }
  .defaults { position: absolute; left: 4px; top: 0; }
  .sw { display: block; width: 16px; height: 16px; border: 1px solid #fff; position: absolute; }
  .sw.fg { background: #2a77a3; left: 5px; top: 18px; }
  .sw.bg { background: #000; left: 15px; top: 28px; }
  .qmask { height: 22px; display: flex; justify-content: center; }
  .qmask span { width: 16px; height: 11px; border: 1px solid #ccc; background: #666; margin-right: 2px; display: flex; align-items: center; justify-content: center; }
  .qmask span::after { content: ""; width: 7px; height: 7px; border-radius: 50%; border: 1px dotted #fff; }
  .screenmode { position: relative; height: 24px; padding: 5px 0 0 10px; box-sizing: border-box; }

  .center { width: 1059px; flex: none; display: flex; flex-direction: column; }
  .doctabs { height: 19px; display: flex; background: #3c3c3c; flex: none; box-sizing: border-box; }
  .doctab { display: flex; align-items: center; justify-content: space-between; padding: 0 5px 0 9px; box-sizing: border-box; background: #464646; color: #aeaeae; border-right: 1px solid #333; letter-spacing: .22px; }
  .doctab.on { background: #535353; color: #f2f2f2; }
  .doctab span { white-space: nowrap; }
  .canvas { flex: none; height: 512px; display: flex; background: #282828; overflow: hidden; }
  .docwrap { width: 1044px; padding: 28px 0 0 20px; box-sizing: border-box; overflow: hidden; }
  .vscroll { width: 15px; background: #3f3f3f; display: flex; flex-direction: column; align-items: center; justify-content: space-between; padding: 5px 0 4px; box-sizing: border-box; position: relative; }
  .vthumb { position: absolute; left: 2px; top: 120px; width: 11px; height: 130px; border-radius: 4px; background: linear-gradient(90deg, #777, #8f8f8f); }

  .page { width: 1000px; background: #cdcdcd; font-family: "Open Sans", "Noto Sans", sans-serif; color: #fff; }
  .site-head { height: 64px; background: linear-gradient(#232323, #0e0e0e); display: flex; justify-content: space-between; align-items: flex-start; padding: 10px 12px 0 15px; box-sizing: border-box; }
  .logo { background: #141414; border-radius: 5px; width: 118px; height: 43px; box-sizing: border-box; padding: 4px 0 0 5px; white-space: nowrap; overflow: hidden; }
  .logo-main { font: bold 29px/24px "Liberation Sans", sans-serif; color: #fff; transform: scaleX(.61); transform-origin: left; }
  .logo-sub { font: 12.5px/15px "DejaVu Sans", sans-serif; letter-spacing: .1px; }
  .site-nav { list-style: none; margin: 0; padding: 0; display: flex; gap: 4px; }
  .site-nav li { position: relative; height: 43px; border-radius: 4px; background: #0a0a0a; display: flex; align-items: center; justify-content: center; font-size: 14px; color: #eaeaea; }
  .drop { position: absolute; z-index: 5; left: -18px; top: 48px; width: 141px; box-sizing: border-box; padding: 4px; background: #fff; border-radius: 3px; display: flex; flex-direction: column; gap: 2px; color: #222; }
  .drop::before { content: ""; position: absolute; left: 68px; top: -3px; border: 3px solid transparent; border-top: 0; border-bottom-color: #fff; }
  .drop-item { height: 33px; box-sizing: border-box; background: #c9c9c9; display: flex; align-items: center; justify-content: center; font: 13.5px "DejaVu Sans", sans-serif; white-space: nowrap; letter-spacing: .75px; }
  .drop-item.hover { background: #e0e0e0; }
  .hero { height: 226px; background: #a6192e; border-top: 3px solid #7c1223; box-sizing: border-box; display: flex; position: relative; }
  .hero-left { width: 605px; margin: 10px 0 0 6px; display: flex; flex-direction: column; gap: 5px; flex: none; }
  .promo { height: 43px; background: #92162a; border-radius: 4px; display: flex; align-items: center; justify-content: center; gap: 8px; font-size: 14px; letter-spacing: .14px; color: #f2f2f2; padding: 0 11px 2px 0; box-sizing: border-box; }
  .intro { height: 150px; background: #92162a; border-radius: 4px; text-align: center; padding-top: 3px; box-sizing: border-box; }
  .intro h1 { margin: 0; font-size: 24.8px; font-weight: 300; line-height: 32px; color: #f0f0f0; }
  .intro p { margin: 5px 0 0; padding-left: 38px; text-align: left; font-size: 13px; line-height: 16.700px; color: #fff; white-space: nowrap; letter-spacing: .62px; font-weight: 300; }
  .slider { width: 368px; height: 213px; margin: 10px 0 0 7px; border: 2px solid #fff; border-bottom: 0; box-sizing: border-box; background: #5c5c5c; display: flex; flex-direction: column; }
  .slide-cap { height: 35px; padding-right: 4px; background: #333; display: flex; align-items: center; justify-content: center; font-size: 11.5px; letter-spacing: .63px; white-space: nowrap; color: #f0f0f0; }
  .slide-body { flex: 1; display: flex; align-items: flex-end; justify-content: center; padding-bottom: 13px; }
  .dots { display: flex; gap: 5px; }
  .dots i { width: 9px; height: 9px; border-radius: 50%; background: #fff; }
  .rule { height: 5px; background: #fff; border-bottom: 3px solid #9a9a9a; box-sizing: border-box; }
  .plans { padding-top: 18px; display: flex; flex-direction: column; align-items: center; height: 190px; box-sizing: border-box; overflow: hidden; }
  .vps { width: 326px; height: 72px; flex: none; margin-left: -3px; background: #c2c2c2; border-radius: 5px; box-sizing: border-box; padding: 12px 0 0 10px; display: flex; gap: 5px; color: #111; }
  .vps-text { text-align: center; white-space: nowrap; padding-top: 5px; }
  .vps-title { font: 26px/25px "DejaVu Sans", sans-serif; letter-spacing: -.32px; }
  .vps-sub { font: 17px/21px "DejaVu Sans", sans-serif; letter-spacing: 1.1px; margin-right: 36px; }
  .plan-row { display: flex; flex: none; gap: 15px; margin-top: 16px; margin-left: 1px; }
  .plan { width: 223px; color: #111; height: 90px; }
  .plan:last-child { margin-left: -2px; }
  .marine .teeth { fill: #39f; }
  .forest .teeth { fill: #339533; }
  .volcano .teeth { fill: #993c3c; }
  .plan-name { height: 36px; display: flex; align-items: center; justify-content: center; color: #fff; font-size: 20px; letter-spacing: 1.2px; }
  .marine .plan-name { background: #39f; font-size: 19px; letter-spacing: .4px; padding-right: 6px; box-sizing: border-box; }
  .forest .plan-name { background: #339533; }
  .volcano .plan-name { background: #993c3c; padding-left: 3px; box-sizing: border-box; }
  .plan-price { background: #fff; padding-left: 4px; text-align: center; font-size: 36.5px; line-height: 52px; font-weight: 300; white-space: nowrap; }
  .plan-price small { font-size: 26px; }

  .status { height: 18px; display: flex; align-items: stretch; background: #4a4a4a; flex: none; color: #ddd; }
  .zoomval { width: 48px; padding-left: 11px; box-sizing: border-box; display: flex; align-items: center; background: #444; }
  .stat-icon { width: 24px; display: flex; align-items: center; justify-content: center; background: #5a5a5a; }
  .docsize { width: 170px; padding-left: 45px; box-sizing: border-box; display: flex; align-items: center; background: #4e4e4e; }
  .stat-arrow { width: 10px; display: flex; align-items: center; justify-content: center; background: #5a5a5a; border-left: 1px solid #333; border-right: 1px solid #333; }
  .hscroll { flex: 1; display: flex; align-items: center; justify-content: space-between; padding: 0 21px 0 6px; position: relative; background: #3f3f3f; }
  .hthumb { position: absolute; left: 261px; top: 2px; width: 268px; height: 13px; border-radius: 3px; background: linear-gradient(#8a8a8a, #6e6e6e); }
  .bottom { flex: 1; min-height: 0; display: flex; flex-direction: column; background: #464646; border-top: 1px solid #2d2d2d; box-sizing: border-box; }
  .btabs { height: 18px; display: flex; background: #3e3e3e; flex: none; position: relative; }
  .btab { display: flex; align-items: center; padding: 0 6px; font-weight: bold; font-size: 10.5px; color: #8f8f8f; background: #444; border-right: 1px solid #2f2f2f; }
  .btab.on { background: #535353; color: #ddd; }
  .menuic { margin-left: auto; margin-right: 4px; align-self: center; }
  .frames { height: 76px; flex: none; padding: 1px 0 0 0; box-sizing: border-box; }
  .frame { width: 60px; height: 74px; background: #566578; padding: 3px 0 0 3px; box-sizing: border-box; }
  .thumb { width: 54px; height: 54px; border: 1px solid #fff; box-sizing: border-box; background: #ccc; position: relative; display: flex; flex-direction: column; overflow: hidden; }
  .fnum { position: absolute; left: 1px; top: 1px; width: 13px; height: 12px; background: #444; font: bold 10px/12px "Liberation Sans"; text-align: center; color: #fff; }
  .t-head { height: 6px; background: #111; }
  .t-hero { height: 14px; background: #a6192e; }
  .t-hero i { display: block; width: 18px; height: 14px; background: #666; margin-left: auto; margin-right: 1px; }
  .t-body { flex: 1; display: flex; gap: 2px; padding: 7px 2px 0; }
  .t-body b { flex: 1; background: linear-gradient(#39f 0 3px, #eee 3px); }
  .t-body b.g { background: linear-gradient(#393 0 3px, #eee 3px); }
  .t-body b.r { background: linear-gradient(#933 0 3px, #eee 3px); }
  .t-foot { height: 9px; background: linear-gradient(#999, #111); }
  .ftime { display: flex; align-items: center; justify-content: flex-end; gap: 3px; padding: 2px 3px 0 0; color: #e4e4e4; }
  .tlbar { height: 20px; display: flex; margin-left: 30px; width: 274px; flex: none; background: #535353; border-top: 1px solid #333; box-sizing: border-box; }
  .forever { width: 70px; display: flex; align-items: center; justify-content: space-between; padding: 0 4px 0 11px; box-sizing: border-box; border-right: 1px solid #333; color: #ddd; }
  .tlbtns { width: 117px; display: flex; align-items: center; justify-content: space-between; padding: 0 8px; box-sizing: border-box; border-right: 1px solid #333; }
  .tlbtns.two { flex: 1; border: 0; padding: 0 8px; }

  .dock { flex: none; background: #535353; border-left: 1px solid #2f2f2f; border-right: 1px solid #2f2f2f; box-sizing: content-box; width: 41px; }
  .dockcell { height: 41px; box-sizing: border-box; border-bottom: 1px solid #2f2f2f; display: flex; flex-direction: column; align-items: center; gap: 4px; padding-top: 3px; }
  .dockcell.tall { height: 70px; font-family: "DejaVu Sans", sans-serif; }
  .dock-a { font-size: 19px; line-height: 19px; color: #aaa; display: flex; }
  .dock-a i { width: 1px; background: #aaa; margin-left: 1px; }
  .dock-p { font-size: 17px; line-height: 18px; color: #aaa; font-weight: bold; }

  .panels { width: 223px; flex: none; background: #2e2e2e; display: flex; flex-direction: column; }
  .pgroup { background: #535353; margin-bottom: 3px; }
  .ptabs { height: 17px; display: flex; background: #3f3f3f; position: relative; }
  .ptab { display: flex; align-items: center; padding: 0 7px; color: #8f8f8f; font-weight: normal; font-size: 10.5px; border-right: 1px solid #2f2f2f; background: #474747; }
  .ptab.on { background: #535353; color: #e6e6e6; }
  .colorbody { height: 100px; padding: 10px 6px 0; box-sizing: border-box; }
  .colortop { display: flex; }
  .pair { width: 37px; height: 60px; position: relative; flex: none; }
  .pair .sw { width: 16px; height: 17px; }
  .pair .sw.fg { left: 1px; top: 0; outline: 1px solid #777; }
  .pair .sw.bg { left: 10px; top: 10px; }
  .chans { display: flex; flex-direction: column; gap: 6px; margin-top: -2px; }
  .chan { height: 18px; display: flex; align-items: center; }
  .chlabel { width: 15px; font-size: 12px; color: #ddd; }
  .chbar { width: 85px; height: 5px; margin-top: -7px; position: relative; outline: 1px solid #444; }
  .chthumb { position: absolute; top: 6px; margin-left: -5px; }
  .chval { width: 46px; height: 19px; margin-left: 6px; background: #3b3b3b; border: 1px solid #484848; box-sizing: border-box; display: flex; align-items: center; padding-left: 4px; font-size: 11.5px; color: #eee; }
  .spectrum { width: 198px; height: 15px; margin-top: 11px; background: linear-gradient(rgba(255,255,255,.45), transparent 40%, transparent 50%, #000), linear-gradient(90deg, #e00, #ee0 22%, #0a5 36%, #0bf 50%, #006 66%, #d08 84%, #e00); position: relative; }
  .spw, .spb { position: absolute; right: 0; width: 8px; height: 7.500px; }
  .spw { top: 0; background: #fff; }
  .spb { bottom: 0; background: #000; }

  .styles { margin-bottom: 4px; }
  .styles .ptabs { height: 18px; }
  .stylesbody { height: 97px; display: flex; }
  .stylegrid { width: 192px; display: grid; grid-template-columns: repeat(6, 32px); grid-auto-rows: 32px; flex: none; }
  .tile { box-sizing: border-box; border: 1px solid #474747; display: flex; align-items: center; justify-content: center; background: #535353; }
  .tile.first { background: #3a3a3a; }
  .st { display: block; width: 16px; height: 16px; }
  .s0 { background: linear-gradient(to top right, #fff 46%, #d01c2c 46% 54%, #fff 54%); border: 1px solid #000; }
  .s1 { background: radial-gradient(#ffe100, #f33 70%); box-shadow: 1px 2px 2px #111; }
  .s2 { border: 3px double #e9e6c0; background: #555; border-radius: 3px; box-sizing: border-box; width: 24px; height: 24px; }
  .s3 { background: radial-gradient(#333 25%, #888 30%, #222 60%, #555); border-radius: 4px; box-shadow: 1px 1px 2px #000; }
  .s4 { background: linear-gradient(135deg, #2c7fd0 30%, #9cd 45%, #2a70b8 60%); }
  .s5 { background: #999; }
  .s6 { background: linear-gradient(90deg, #222, #999); }
  .s7 { background: #625a40; }
  .s8 { background: linear-gradient(#5a4a28, #8a7a58); }
  .s9 { background: repeating-linear-gradient(#d42a3c 0 3px, #7a2a50 3px 5px); }
  .s10 { background: linear-gradient(135deg, #111 20%, #2ac 35%, #e8d040 55%, #f55 70%, #111); }
  .s11 { background: #e6c000; box-shadow: inset 0 0 0 3px #e6c000, inset 0 0 0 8px #6a6200; }
  .s12 { background: linear-gradient(135deg, #c86a3c, #997a50); }
  .s13 { background: linear-gradient(#aacdef, #6aa0d8); border: 1px solid #cde; box-sizing: border-box; }
  .s14 { background: linear-gradient(#6cb0e8 0 45%, #f0e8c0 45% 60%, #8a5a10 60%); }
  .s15 { background: repeating-conic-gradient(#eee 0 25%, #555 0 50%) 0 0 / 4px 4px; }
  .s16 { background: linear-gradient(135deg, #a060b0, #5060b0); box-shadow: 3px 3px 3px #111; }
  .s17 { background: #505050; box-shadow: 1px 1px 1px #333; }
  .pscroll { flex: 1; background: #414141; display: flex; flex-direction: column; align-items: center; justify-content: space-between; padding: 6px 0 4px; position: relative; border-left: 1px solid #474747; box-sizing: border-box; margin-left: 15px; }
  .pscroll.wide { margin: 0; }
  .pthumb { position: absolute; left: 2px; right: 2px; border-radius: 4px; background: linear-gradient(90deg, #6f6f6f, #8c8c8c); }
  .st-thumb { top: 18px; height: 44px; }
  .lay-thumb { top: 86px; height: 130px; }
  .pfoot { display: flex; align-items: center; box-sizing: border-box; border-top: 1px solid #3c3c3c; }
  .stylesfoot { height: 18px; padding-left: 122px; gap: 18px; background: #4f4f4f; }
  .layersfoot { height: 19px; padding-left: 18px; gap: 15px; flex: none; }
  .ffx { font: italic 14px "Liberation Serif", serif; color: #aaa; display: flex; }

  .layers { flex: 1; margin: 0; display: flex; flex-direction: column; min-height: 0; }
  .lt { height: 16px; flex: none; }
  .lrow { height: 28px; box-sizing: border-box; display: flex; align-items: center; flex: none; border-bottom: 1px solid #3c3c3c; padding: 0 6px 0 4px; }
  .kind { width: 70px; justify-content: flex-start; }
  .kindtxt { margin-left: 5px; flex: 1; }
  .filters { display: flex; align-items: center; gap: 12px; margin-left: 12px; }
  .ft { font: 17px "Liberation Serif", serif; color: #aaa; width: 12px; }
  .toggle { width: 8px; height: 18px; border: 1px solid #333; background: linear-gradient(#777 50%, #444 50%); }
  .pass { width: 110px; }
  .rowlabel { color: #ddd; }
  .blend .rowlabel { margin-left: 8px; }
  .pct { margin-left: auto; width: 53px; height: 20px; box-sizing: border-box; background: #333; border: 1px solid #2c2c2c; display: flex; align-items: center; padding-left: 5px; border-radius: 2px; color: #eee; justify-content: space-between; flex: none; }
  .pct b { width: 18px; height: 18px; background: #5a5a5a; display: flex; align-items: center; justify-content: center; }
  .unify { gap: 6px; background: #4f4f4f; white-space: nowrap; padding-left: 6px; }
  .dim { color: #8a8a8a; }
  .prop { font-size: 10.5px; }
  .fxdim { font: italic 13px "Liberation Serif", serif; color: #777; }
  .pcheck { width: 13px; height: 13px; border: 1px solid #666; border-radius: 2px; margin-left: 10px; display: flex; align-items: center; justify-content: center; }
  .lock { gap: 8.500px; padding-left: 6px; }
  .lock .fill { margin-left: auto; margin-right: -4px; }
  .lock .pct { margin-left: 0; }
  .lists { flex: 1; min-height: 0; display: flex; overflow: hidden; }
  .rows { width: 207px; flex: none; display: flex; flex-direction: column; justify-content: flex-end; overflow: hidden; }
  .row { height: 23px; flex: none; display: flex; border-bottom: 1px solid #3a3a3a; box-sizing: border-box; }
  .eye { width: 30px; display: flex; align-items: center; justify-content: center; border-right: 1px solid #3a3a3a; flex: none; padding-bottom: 2px; box-sizing: border-box; }
  .lbody { flex: 1; display: flex; align-items: center; padding-left: 5px; gap: 4px; }
  .folder { margin-right: 7px; }
  .lname { color: #e6e6e6; font-size: 10.5px; }
  .row.sel .lbody { background: #566274; }

  .taskbar { background: linear-gradient(90deg, #3f7cba, #5290cc 15%, #4c88c4 50%, #4e8bc6 85%, #3f7cba); display: flex; align-items: center; padding-left: 17px; gap: 4px; border-top: 1px solid #6fa3d8; box-sizing: border-box; }
  .taskbtn { width: 58px; height: 37px; box-sizing: border-box; border: 1px solid #8fb5dc; background: rgba(255,255,255,.17); display: flex; align-items: center; justify-content: center; }
  .taskbtn.active { background: rgba(255,255,255,.42); border-color: #eaf2fb; }
  .psicon { width: 28px; height: 26px; box-sizing: border-box; border: 2px solid #7eb1ec; background: #151c63; font: bold 15px/21px "Liberation Sans", sans-serif; color: #8ec0f5; text-align: center; }
  .tray { margin-left: auto; display: flex; align-items: center; color: #fff; margin-right: 26px; }
  .sig { margin-left: 13px; }
  .bat { margin-left: 15px; }
  .spk { margin-left: 9px; }
  .eng { margin-left: 15px; font-size: 12px; width: 40px; }
  .clock { display: flex; flex-direction: column; align-items: flex-end; width: 58px; font-size: 12px; line-height: 17px; color: #fff; }
  .clock span:first-child { margin-right: 15px; }
</style>
